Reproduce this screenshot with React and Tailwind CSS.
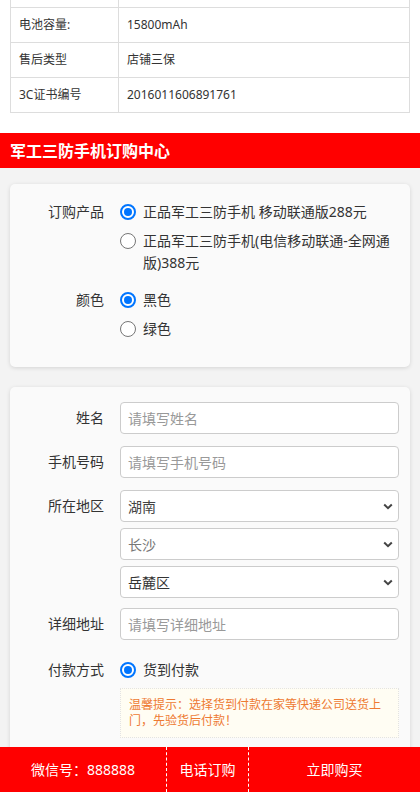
import React from 'react';

const specs = [
  ['', ''],
  ['电池容量:', '15800mAh'],
  ['售后类型', '店铺三保'],
  ['3C证书编号', '2016011606891761'],
];

const Radio = ({ checked }) =>
  checked ? (
    <span className="w-[16px] h-[16px] shrink-0 rounded-full border-2 border-[#0075ff] bg-white flex items-center justify-center">
      <span className="w-[8px] h-[8px] rounded-full bg-[#0075ff]" />
    </span>
  ) : (
    <span className="w-[16px] h-[16px] shrink-0 rounded-full border border-[#767676] bg-white" />
  );

const Option = ({ checked, children }) => (
  <div className="flex items-start gap-[7px] mb-[7px]">
    <span className="h-[22px] flex items-center"><Radio checked={checked} /></span>
    <span className="leading-[22px]">{children}</span>
  </div>
);

const Chevron = () => (
  <svg width="10" height="7" viewBox="0 0 10 7" className="shrink-0">
    <path d="M1.2 1.5 L5 5.2 L8.8 1.5" fill="none" stroke="#444" strokeWidth="2" />
  </svg>
);

const Select = ({ value, color }) => (
  <div className={`h-[32px] rounded-[4px] border border-[#ccc] bg-white flex items-center justify-between pl-[7px] pr-[5px] ${color}`}>
    <span>{value}</span>
    <Chevron />
  </div>
);

const Field = ({ label, children, className = '' }) => (
  <div className={`flex ${className}`}>
    <div className="w-[94px] shrink-0 text-right leading-[32px]">{label}</div>
    <div className="flex-1 ml-[16px]">{children}</div>
  </div>
);

const TextInput = ({ placeholder }) => (
  <input
    placeholder={placeholder}
    className="w-full h-[32px] rounded-[4px] border border-[#ccc] bg-white px-[7px] text-[14px] outline-none placeholder:text-[#999]"
  />
);

export default function App() {
  return (
    <div className="min-h-screen bg-[#f3f3f3] text-[#333] font-['Noto_Sans','Noto_Sans_CJK_SC',sans-serif] pb-[60px] overflow-hidden">
      {/* spec table, scrolled so only the last rows show */}
      <div className="bg-white px-[10px] pb-[20px]">
        <div className="-mt-[27px] border-l border-r border-[#ddd] text-[12px]">
          {specs.map(([k, v], i) => (
            <div key={i} className="flex h-[35px] border-b border-[#ddd]">
              <div className="w-[108px] border-r border-[#ddd] pl-[8px] flex items-center">{k}</div>
              <div className="flex-1 pl-[8px] flex items-center">{v}</div>
            </div>
          ))}
        </div>
      </div>

      <div className="h-[35px] bg-[#ff0000] text-white text-[16px] font-bold flex items-center px-[10px]">
        军工三防手机订购中心
      </div>

      {/* product options */}
      <div className="mx-[10px] mt-[16px] rounded-[5px] bg-[#fafafa] shadow-[0_1px_4px_rgba(0,0,0,0.13)] pt-[17px] pb-[20px] pr-[11px] text-[14px]">
        <div className="flex mb-[8px]">
          <div className="w-[94px] shrink-0 text-right leading-[22px]">订购产品</div>
          <div className="flex-1 ml-[16px]">
            <Option checked>正品军工三防手机 移动联通版288元</Option>
            <Option>正品军工三防手机(电信移动联通-全网通版)388元</Option>
          </div>
        </div>
        <div className="flex">
          <div className="w-[94px] shrink-0 text-right leading-[22px]">颜色</div>
          <div className="flex-1 ml-[16px]">
            <Option checked>黑色</Option>
            <Option>绿色</Option>
          </div>
        </div>
      </div>

      {/* buyer info */}
      <div className="mx-[10px] mt-[20px] rounded-[5px] bg-[#fafafa] shadow-[0_1px_4px_rgba(0,0,0,0.13)] pt-[15px] pb-[30px] pr-[11px] text-[14px]">
        <Field label="姓名" className="mb-[12px]">
          <TextInput placeholder="请填写姓名" />
        </Field>
        <Field label="手机号码" className="mb-[12px]">
          <TextInput placeholder="请填写手机号码" />
        </Field>
        <Field label="所在地区" className="mb-[10px]">
          <div className="flex flex-col gap-[6px]">
            <Select value="湖南" color="text-[#444]" />
            <Select value="长沙" color="text-[#777]" />
            <Select value="岳麓区" color="text-[#333]" />
          </div>
        </Field>
        <Field label="详细地址" className="mb-[19px]">
          <TextInput placeholder="请填写详细地址" />
        </Field>
        <div className="flex">
          <div className="w-[94px] shrink-0 text-right leading-[22px]">付款方式</div>
          <div className="flex-1 ml-[16px]">
            <Option checked>货到付款</Option>
            <div className="border border-dotted border-[#e3e3e3] bg-[#fffdf3] px-[8px] py-[8px] text-[12px] leading-[16px] text-[#ee7a32]">
              温馨提示：选择货到付款在家等快递公司送货上门，先验货后付款！
            </div>
          </div>
        </div>
      </div>

      {/* bottom bar */}
      <div className="fixed bottom-0 left-0 right-0 h-[45px] bg-[#ff0000] text-white text-[14px] flex">
        <div className="w-[166px] flex items-center justify-center">微信号：888888</div>
        <div className="w-[83px] flex items-center justify-center border-l border-r border-dashed border-white">电话订购</div>
        <div className="flex-1 flex items-center justify-center">立即购买</div>
      </div>
    </div>
  );
}
